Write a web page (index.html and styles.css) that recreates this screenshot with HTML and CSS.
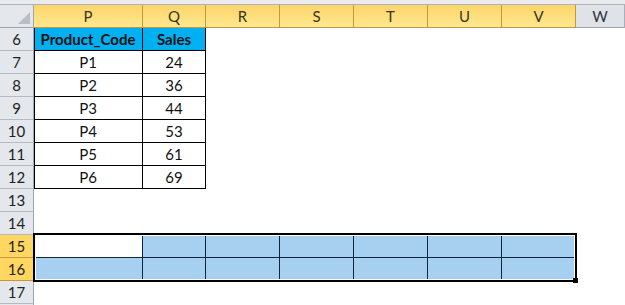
FILE: index.html
```html
<!DOCTYPE html>
<html lang="en">
<head>
    <meta charset="UTF-8">
    <meta name="viewport" content="width=device-width, initial-scale=1.0">
    <title>Sheet - Product Sales</title>
    <link rel="stylesheet" href="styles.css">
</head>
<body>
    <div class="ribbon-edge"></div>
    <div class="sheet-wrap">
        <div class="sheet" id="sheet">
            <!-- Header and rows generated below -->
        </div>
        <div class="selection"><span class="fill-handle"></span></div>
    </div>

    <script>
        const cols = ["P", "Q", "R", "S", "T", "U", "V", "W"];
        const selectedCols = ["P", "Q", "R", "S", "T", "U", "V"];
        const data = [
            ["Product_Code", "Sales"],
            ["P1", 24], ["P2", 36], ["P3", 44],
            ["P4", 53], ["P5", 61], ["P6", 69]
        ];

        const sheet = document.getElementById("sheet");

        function addCell(cls, text) {
            const div = document.createElement("div");
            div.className = cls;
            if (text !== undefined) div.textContent = text;
            sheet.appendChild(div);
            return div;
        }

        // column headers
        addCell("corner");
        cols.forEach(c => {
            addCell(selectedCols.includes(c) ? "col-head sel" : "col-head", c);
        });

        for (let row = 6; row <= 18; row++) {
            const rowSelected = row === 15 || row === 16;
            // row 18 only peeks in at the bottom edge, no label
            addCell(rowSelected ? "row-head sel" : "row-head", row < 18 ? row : undefined);

            cols.forEach((c, i) => {
                let cls = "cell";
                let text;
                const dataRow = data[row - 6];

                if (dataRow && i < 2) {
                    cls += " tbl";
                    if (i === 0) cls += " first";
                    if (row === 6) cls += " tbl-head";
                    text = dataRow[i];
                } else if (rowSelected && i < 7) {
                    cls += " tbl sel-cell";
                    if (i === 0) cls += " first";
                    if (!(row === 15 && i === 0)) cls += " hl";
                }
                addCell(cls, text);
            });
        }
    </script>
</body>
</html>
```

FILE: styles.css
```css
body {
    margin: 0;
    background: #fff;
    font-family: Lato, "Liberation Sans", sans-serif;
    font-size: 15px;
    color: #111;
    overflow: hidden;
}

.ribbon-edge {
    height: 4px;
    background: #e9ebee;
    border-bottom: 1px solid #aeb3ba;
}

.sheet-wrap {
    position: relative;
}

.sheet {
    display: grid;
    grid-template-columns: 34px 109px 63px repeat(5, 74px) 1fr;
    grid-auto-rows: 23px;
}

.sheet div {
    box-sizing: border-box;
    display: flex;
    align-items: center;
    justify-content: center;
    border-right: 1px solid transparent;
    border-bottom: 1px solid transparent;
}

.corner {
    background: #e4e7eb;
    border-right-color: #9ea5ae !important;
    border-bottom-color: #9ea5ae !important;
    position: relative;
}

.corner::after {
    content: "";
    position: absolute;
    right: 3px;
    bottom: 3px;
    border-left: 12px solid transparent;
    border-bottom: 12px solid #b9bec5;
}

.col-head {
    background: #dfe3e8;
    color: #2e3440;
    border-right-color: #a6b0bc !important;
    border-bottom-color: #9ea5ae !important;
}

.col-head.sel {
    background: linear-gradient(#fdd56a, #ffe88f);
    border-right-color: #c7963c !important;
    border-bottom-color: #c7963c !important;
    color: #3a3320;
}

.row-head {
    background: #e4e7eb;
    color: #222;
    border-right-color: #9ea5ae !important;
    border-bottom-color: #b4bbc4 !important;
}

.row-head.sel {
    background: #ffd65f;
    border-right-color: #c7963c !important;
    border-bottom-color: #c7963c !important;
}

.cell.tbl {
    border-right-color: #000;
    border-bottom-color: #000;
}

.cell.first {
    box-shadow: inset 1px 0 0 #000;
}

.tbl-head {
    background: #00b0f0;
    font-weight: bold;
}

.cell.sel-cell {
    border-right-color: #0c2640;
    border-bottom-color: #0c2640;
}

.cell.hl {
    background: #a6cff0;
}

/* selection outline drawn over the grid */
.selection {
    position: absolute;
    left: 33px;
    top: 228px;
    width: 544px;
    height: 49px;
    box-sizing: border-box;
    border: 2px solid #000;
    box-shadow: inset 0 0 0 1px #fff;
    pointer-events: none;
}

.fill-handle {
    position: absolute;
    right: -4px;
    bottom: -4px;
    width: 5px;
    height: 5px;
    background: #000;
    border: 1px solid #fff;
    border-top: none;
    border-left: none;
}
```
